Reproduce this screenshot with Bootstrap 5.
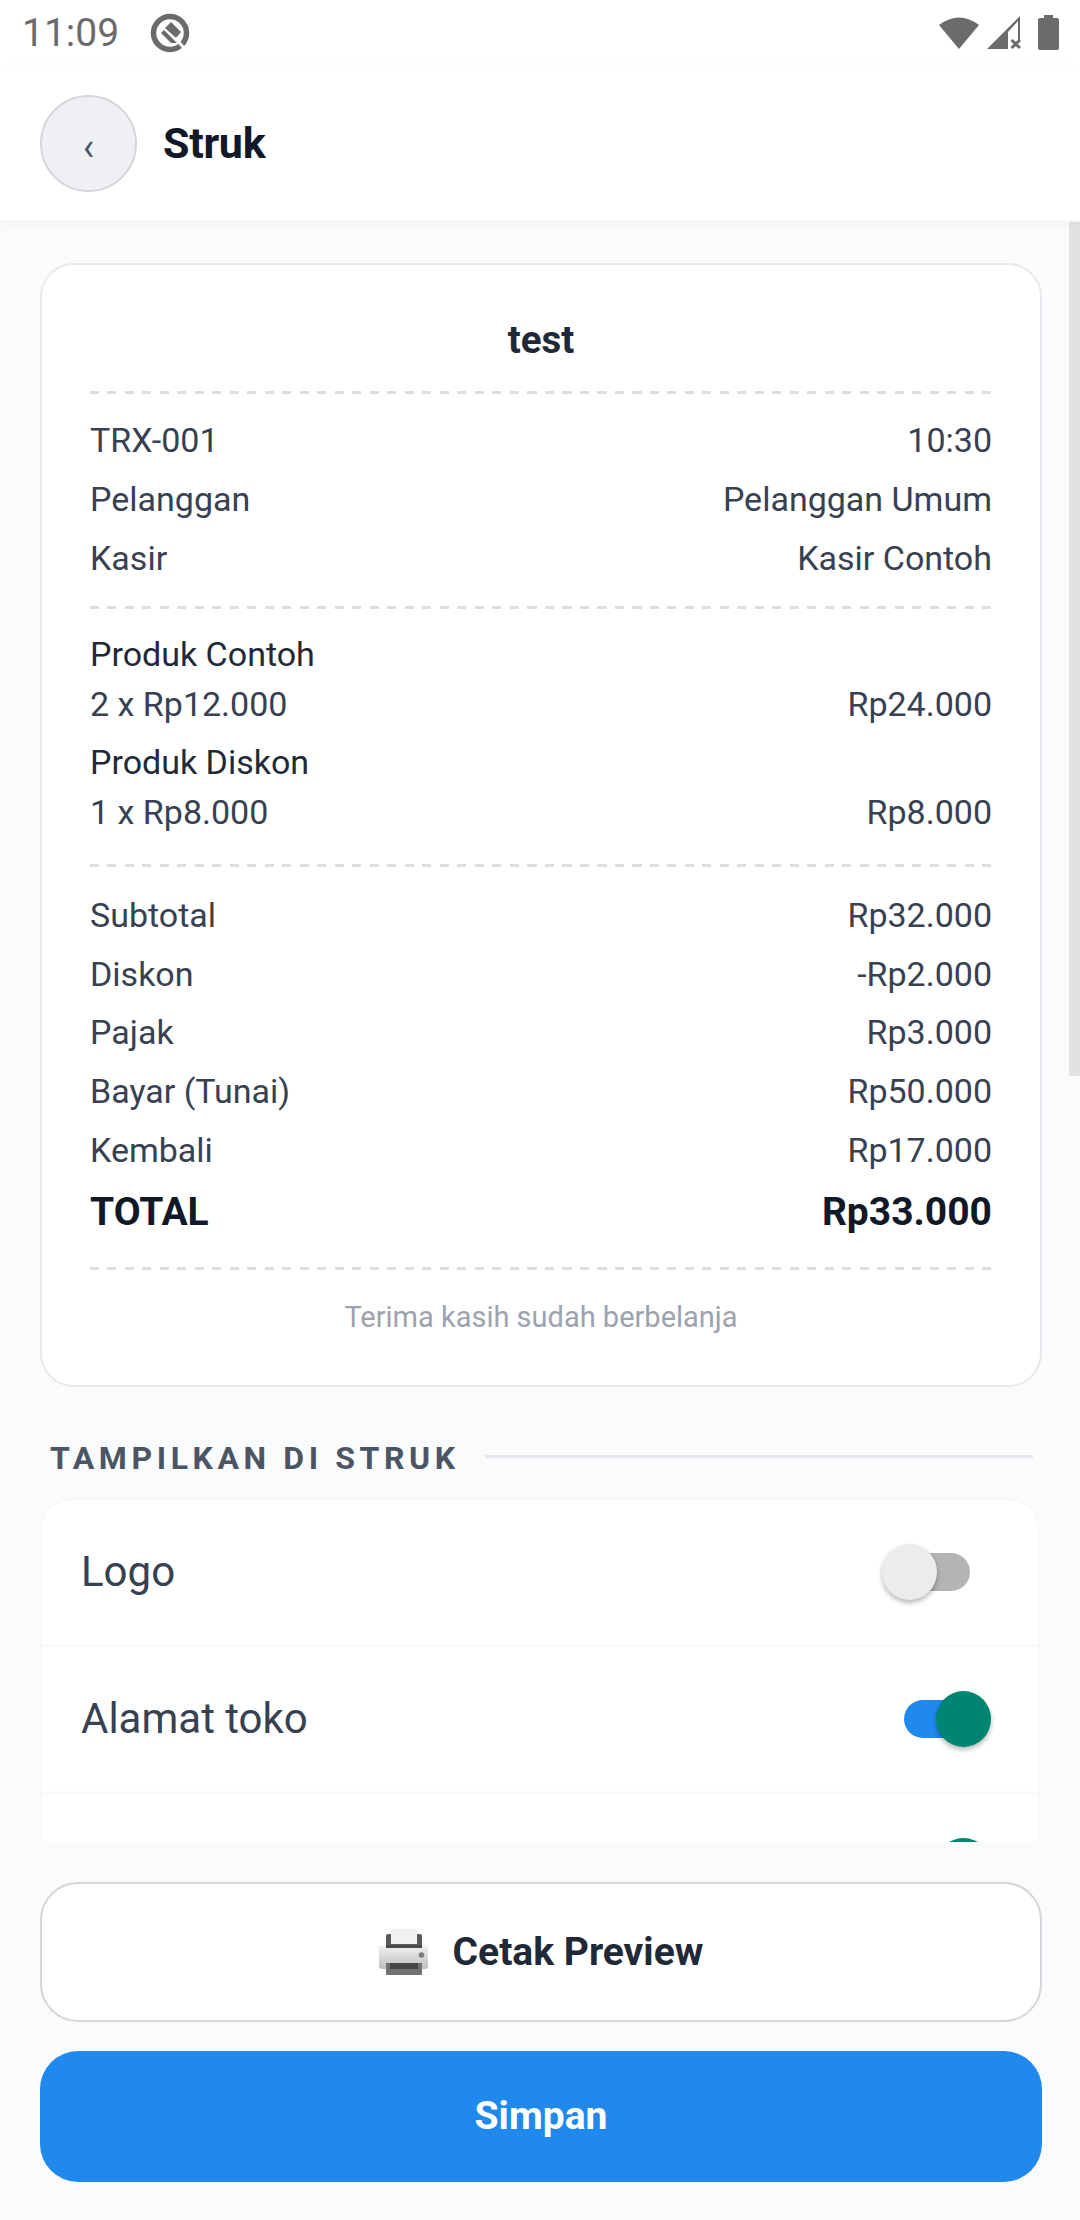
<!DOCTYPE html>
<html lang="id">
<head>
    <meta charset="UTF-8">
    <meta name="viewport" content="width=device-width, initial-scale=1.0">
    <title>Struk</title>
    <link href="https://cdn.jsdelivr.net/npm/bootstrap@5.3.0/dist/css/bootstrap.min.css" rel="stylesheet">
    <style>
        body {
            font-family: "Roboto", "Liberation Sans", sans-serif;
            background-color: #f9fbfd;
            color: #374151;
        }
        .app-shell { height: 2220px; overflow: hidden; }

        /* status bar */
        .status-bar { height: 66px; padding: 0 20px 0 22px; background: #fff; color: #6b6b6b; }
        .status-time { font-size: 39px; line-height: 1; width: 128px; }

        /* header */
        .top-bar { height: 154px; padding: 0 40px; gap: 26px; background: #fff; box-shadow: 0 3px 10px rgba(0,0,0,.04); z-index: 2; }
        .back-btn { width: 97px; height: 97px; padding: 8px 0 0; border: 2px solid #d4d6d9; background: #eef0f3; color: #4b5563; font-size: 38px; line-height: 1; }
        .top-title { font-size: 43px; font-weight: 700; color: #111827; letter-spacing: -.3px; }

        /* content */
        .scroll-area { padding: 43px 38px 0 40px; overflow: hidden; }
        .scroll-thumb { position: absolute; top: 2px; right: 0; width: 11px; height: 854px; background: #e2e2e2; }

        .receipt-box { border: 2px solid #e7e9ec; border-radius: 34px; padding: 48px 48px 48px; background: #fff; }
        .receipt-name { font-size: 38.5px; line-height: 54px; font-weight: 700; color: #1f2937; text-align: center; }
        .dash-line { height: 3px; background: repeating-linear-gradient(90deg, #dcdee2 0 9px, transparent 9px 17.5px); }
        .dash-head { margin: 24px 0 21px; }
        .dash-meta { margin: 23px 0 20px; }
        .dash-items { margin: 27px 0 22.5px; }
        .dash-totals { margin: 28px 0 27px; }
        .receipt-row { font-size: 34px; line-height: 50px; color: #374151; }
        .gap-row { margin-top: 8.75px; }
        .item-name { color: #1f2937; }
        .total-row { font-size: 39px; line-height: 54px; font-weight: 700; color: #111827; margin-top: 10px; }
        .thanks { font-size: 29px; line-height: 40px; color: #9ca3af; text-align: center; }

        .section-head { margin: 51px 9px 0 10px; gap: 25px; height: 40px; }
        .section-label { font-size: 32px; font-weight: 700; letter-spacing: 4.6px; color: #4b5563; white-space: nowrap; }
        .section-rule { height: 3px; background: #e5e7eb; margin-top: -2px; }

        .switch-list { margin: 21px 3px 0 1px; border: 1px solid #f4f5f7; border-radius: 30px; overflow: hidden; background: #fff; }
        .switch-list .list-group-item { height: 147px; padding: 0 68px 0 39px; border: 0; border-bottom: 3px solid #f9fafb; background: #fff; }
        .switch-label { font-size: 42px; color: #374151; }
        .toggle-track { position: relative; display: block; width: 66px; height: 38px; border-radius: 19px; background: #b4b4b4; }
        .toggle-knob { position: absolute; top: -9px; left: -22px; width: 55px; height: 56px; border-radius: 50%; background: #ececec; box-shadow: 0 3px 5px rgba(0,0,0,.28); }
        .toggle-on { background: #2089ee; }
        .toggle-on .toggle-knob { left: 32px; background: #008573; }

        /* bottom buttons */
        .bottom-bar { padding: 40px 38px 38px 40px; gap: 29px; }
        .preview-btn { height: 140px; border: 2px solid #d4d6d9; border-radius: 38px; background: #fff; color: #1f2937; font-size: 39px; font-weight: 700; gap: 24px; }
        .save-btn { height: 131px; border: 0; border-radius: 38px; background: #2089ee; color: #fff; font-size: 39px; font-weight: 700; }
        .save-btn:hover { background: #2089ee; color: #fff; }
    </style>
</head>
<body>

<div class="app-shell d-flex flex-column">

    <div class="status-bar d-flex align-items-center flex-shrink-0">
        <span class="status-time">11:09</span>
        <svg width="40" height="40" viewBox="0 0 40 40">
            <circle cx="20" cy="20" r="16.5" fill="none" stroke="#6b6b6b" stroke-width="5.5"/>
            <path d="M21 9 L31 19 L26 25 L15 15 Z" fill="#6b6b6b"/>
            <path d="M11 20 L21 30 L27 30 L14 17 Z" fill="#6b6b6b"/>
            <path d="M25 25 L34 35" stroke="#fff" stroke-width="3"/>
        </svg>
        <span class="ms-auto d-flex align-items-center">
            <svg width="44" height="36" viewBox="0 0 44 36" class="me-1">
                <path d="M1 10 Q21 -5 41 10 L21 34 Z" fill="#6b6b6b"/>
            </svg>
            <svg width="36" height="36" viewBox="0 0 36 36" class="me-3">
                <path d="M34 1 V26 H32 V6 L22 17 V34 H1 Z" fill="#6b6b6b"/>
                <path d="M25.500 25 L34 33 M34 25 L25.500 33" stroke="#6b6b6b" stroke-width="3"/>
            </svg>
            <svg width="22" height="36" viewBox="0 0 22 36">
                <path d="M6 0 H15 V3 H19 Q21 3 21 5 V33 Q21 35 19 35 H2 Q0 35 0 33 V5 Q0 3 2 3 H6 Z" fill="#6b6b6b"/>
            </svg>
        </span>
    </div>

    <div class="top-bar d-flex align-items-center flex-shrink-0">
        <button type="button" class="btn back-btn rounded-circle">‹</button>
        <span class="top-title">Struk</span>
    </div>

    <div class="scroll-area flex-grow-1 position-relative">
        <div class="scroll-thumb"></div>

        <div class="receipt-box">
            <div class="receipt-name">test</div>
            <div class="dash-line dash-head"></div>
            <div class="receipt-row d-flex justify-content-between"><span>TRX-001</span><span>10:30</span></div>
            <div class="receipt-row gap-row d-flex justify-content-between"><span>Pelanggan</span><span>Pelanggan Umum</span></div>
            <div class="receipt-row gap-row d-flex justify-content-between"><span>Kasir</span><span>Kasir Contoh</span></div>
            <div class="dash-line dash-meta"></div>
            <div class="receipt-row item-name">Produk Contoh</div>
            <div class="receipt-row d-flex justify-content-between"><span>2 x Rp12.000</span><span>Rp24.000</span></div>
            <div class="receipt-row item-name gap-row">Produk Diskon</div>
            <div class="receipt-row d-flex justify-content-between"><span>1 x Rp8.000</span><span>Rp8.000</span></div>
            <div class="dash-line dash-items"></div>
            <div class="receipt-row d-flex justify-content-between"><span>Subtotal</span><span>Rp32.000</span></div>
            <div class="receipt-row gap-row d-flex justify-content-between"><span>Diskon</span><span>-Rp2.000</span></div>
            <div class="receipt-row gap-row d-flex justify-content-between"><span>Pajak</span><span>Rp3.000</span></div>
            <div class="receipt-row gap-row d-flex justify-content-between"><span>Bayar (Tunai)</span><span>Rp50.000</span></div>
            <div class="receipt-row gap-row d-flex justify-content-between"><span>Kembali</span><span>Rp17.000</span></div>
            <div class="total-row d-flex justify-content-between"><span>TOTAL</span><span>Rp33.000</span></div>
            <div class="dash-line dash-totals"></div>
            <div class="thanks">Terima kasih sudah berbelanja</div>
        </div>

        <div class="section-head d-flex align-items-center">
            <span class="section-label">TAMPILKAN DI STRUK</span>
            <span class="section-rule flex-grow-1"></span>
        </div>

        <div class="switch-list list-group">
            <div class="list-group-item d-flex justify-content-between align-items-center">
                <span class="switch-label">Logo</span>
                <span class="toggle-track"><span class="toggle-knob"></span></span>
            </div>
            <div class="list-group-item d-flex justify-content-between align-items-center">
                <span class="switch-label">Alamat toko</span>
                <span class="toggle-track toggle-on"><span class="toggle-knob"></span></span>
            </div>
            <div class="list-group-item d-flex justify-content-end align-items-center">
                <span class="toggle-track toggle-on"><span class="toggle-knob"></span></span>
            </div>
        </div>
    </div>

    <div class="bottom-bar d-flex flex-column flex-shrink-0">
        <button type="button" class="btn preview-btn w-100 d-flex justify-content-center align-items-center">
            <svg width="50" height="46" viewBox="0 0 50 46">
                <defs>
                    <linearGradient id="printerBody" x1="0" y1="0" x2="0" y2="1">
                        <stop offset="0" stop-color="#f4f4f4"/>
                        <stop offset="1" stop-color="#bdbdbd"/>
                    </linearGradient>
                </defs>
                <rect x="7" y="5" width="36" height="20" rx="2" fill="#5a5a5a"/>
                <rect x="12" y="0" width="26" height="15" fill="#f1f1f1"/>
                <rect x="0" y="16" width="49" height="24" rx="3" fill="url(#printerBody)"/>
                <rect x="7" y="16" width="36" height="3" fill="#4a4a4a"/>
                <circle cx="42.500" cy="26" r="2.800" fill="#7d7d7d"/>
                <rect x="7" y="34" width="36" height="12" rx="1" fill="#707070"/>
                <rect x="11" y="34" width="28" height="6" fill="#454545"/>
            </svg>
            <span>Cetak Preview</span>
        </button>
        <button type="button" class="btn save-btn w-100">Simpan</button>
    </div>

</div>

<script src="https://cdn.jsdelivr.net/npm/bootstrap@5.3.0/dist/js/bootstrap.bundle.min.js"></script>
</body>
</html>
